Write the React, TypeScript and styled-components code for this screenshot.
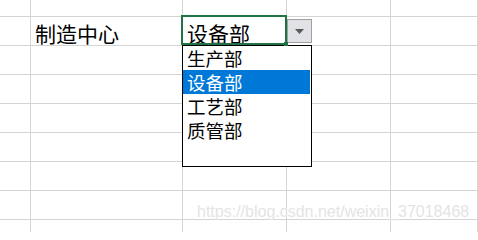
import React from "react";
import styled, { createGlobalStyle } from "styled-components";

const Global = createGlobalStyle`
  html, body { margin: 0; padding: 0; background: #fff; }
  body { font-family: "Noto Sans CJK SC", "Noto Sans", sans-serif; }
`;

const Sheet = styled.div`
  position: relative;
  width: 478px;
  height: 232px;
  overflow: hidden;
  background: #fff;
`;

const Grid = styled.div`
  display: grid;
  grid-template-columns: 31px 152px 104px 104px 1fr;
  grid-template-rows: 17px repeat(8, 29px);
`;

const Cell = styled.div`
  border-right: 1px solid #d4d4d4;
  border-bottom: 1px solid #d4d4d4;
  display: flex;
  align-items: center;
  padding: 3px 0 0 4px;
  font-family: "Noto Sans CJK SC", sans-serif;
  font-size: 21px;
  color: #000;
  white-space: nowrap;
  box-sizing: border-box;
`;

/* The in-cell dropdown editor floats over the sheet */
const Editor = styled.div`
  position: absolute;
  left: 181px;
  top: 15px;
  display: flex;
  flex-direction: column;
`;

const EditorRow = styled.div`
  display: flex;
  align-items: flex-start;
`;

const Selection = styled.div`
  position: relative;
  width: 106px;
  height: 30px;
  border: 2px solid #217346;
  box-sizing: border-box;
`;

const Handle = styled.div`
  position: absolute;
  right: -3px;
  bottom: -3px;
  width: 4px;
  height: 4px;
  background: #217346;
`;

const DropButton = styled.div`
  margin-top: 4px;
  width: 25px;
  height: 24px;
  box-sizing: border-box;
  background: #e1e2e6;
  border: 1px solid #a0a0a0;
  display: flex;
  align-items: center;
  justify-content: center;
`;

const List = styled.div`
  margin-left: 1px;
  width: 130px;
  height: 122px;
  box-sizing: border-box;
  border: 1px solid #000;
  background: #fff;
  display: flex;
  flex-direction: column;
`;

const Item = styled.div<{ $active?: boolean }>`
  height: 24px;
  margin-right: 1px;
  display: flex;
  align-items: center;
  padding-left: 4px;
  font-family: "Noto Sans CJK SC", sans-serif;
  font-size: 18.5px;
  line-height: 24px;
  background: ${(p) => (p.$active ? "#0078d7" : "transparent")};
  color: ${(p) => (p.$active ? "#fff" : "#000")};
`;

const Watermark = styled.div`
  position: absolute;
  left: 197px;
  top: 203px;
  font-family: "Liberation Sans", Arial, sans-serif;
  font-size: 16px;
  color: #e4e4e4;
  text-shadow: 0 0 1px #fff;
  white-space: nowrap;
`;

const cells: Record<string, string> = {
  "1-1": "制造中心",
  "1-2": "设备部",
};

export default function App() {
  const rows = 9;
  const cols = 5;
  const grid: React.ReactNode[] = [];
  for (let r = 0; r < rows; r++) {
    for (let c = 0; c < cols; c++) {
      grid.push(<Cell key={`${r}-${c}`}>{cells[`${r}-${c}`] ?? ""}</Cell>);
    }
  }
  const items = ["生产部", "设备部", "工艺部", "质管部"];
  return (
    <Sheet>
      <Global />
      <Grid>{grid}</Grid>
      <Editor>
        <EditorRow>
          <Selection>
            <Handle />
          </Selection>
          <DropButton>
            <svg width="9" height="5" viewBox="0 0 9 5">
              <path d="M0 0 H9 L4.5 5 Z" fill="#5a5a5a" />
            </svg>
          </DropButton>
        </EditorRow>
        <List>
          {items.map((it, i) => (
            <Item key={it} $active={i === 1}>
              {it}
            </Item>
          ))}
        </List>
      </Editor>
      <Watermark>https://blog.csdn.net/weixin_37018468</Watermark>
    </Sheet>
  );
}
